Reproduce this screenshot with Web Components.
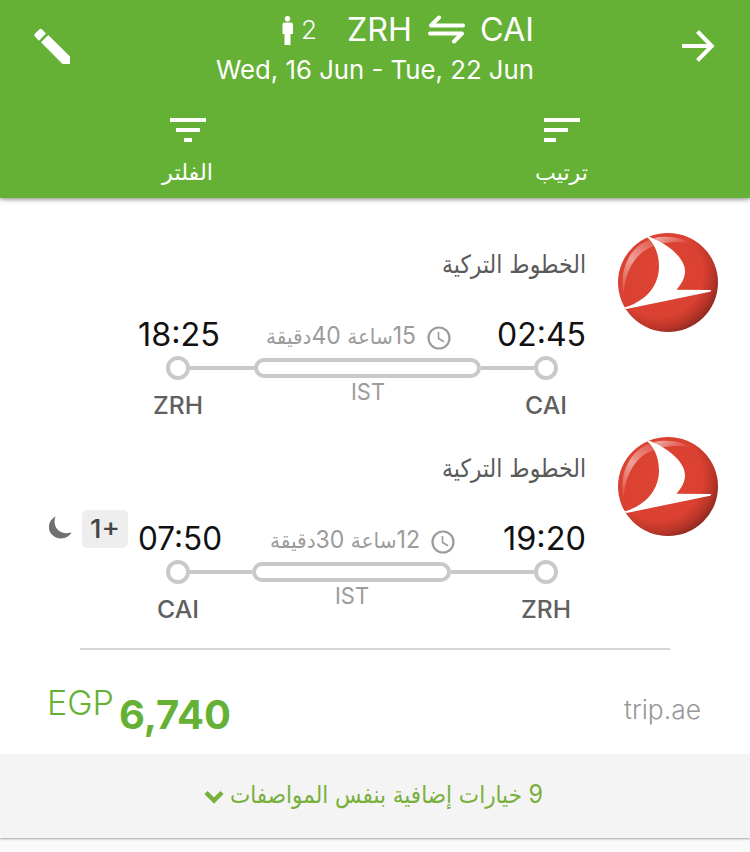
<!DOCTYPE html>
<html lang="ar">
<head>
<meta charset="utf-8">
<title>ZRH - CAI</title>
<style>
    body {
        margin: 0;
        background: #fafafa;
        font-family: Inter, "DejaVu Sans", sans-serif;
    }
</style>
</head>
<body>
<flight-app></flight-app>

<script>
// one line of text, squeezed or stretched to the given width
class FitText extends HTMLElement {
    constructor() {
        super();
        this.attachShadow({ mode: 'open' });
    }

    connectedCallback() {
        const width = this.getAttribute('width');
        this.shadowRoot.innerHTML = `<style>
            :host{
                display:block;
                flex:none;
                width:${width}px;
                white-space:nowrap;
                direction:ltr;
            }
            .inner{
                display:inline-block;
                transform-origin:0 50%;
            }
            ::slotted(.ar){
                font-family:"DejaVu Sans", sans-serif;
                line-height:0;
            }
            </style><span class="inner" dir="${this.getAttribute('dir') || 'ltr'}"><slot></slot></span>`;
        const inner = this.shadowRoot.querySelector('.inner');
        const natural = inner.getBoundingClientRect().width;
        if (natural) {
            inner.style.transform = `scaleX(${width / natural})`;
        }
    }
}

class SearchHeader extends HTMLElement {
    constructor() {
        super();
        this.attachShadow({ mode: 'open' });
    }

    connectedCallback() {
        this.shadowRoot.innerHTML = `<style>
            :host{
                display:block;
                box-sizing:border-box;
                height:198px;
                background:#65b135;
                color:white;
                box-shadow:0 1px 5px rgba(0,0,0,.5);
                position:relative;
            }
            svg{
                display:block;
                fill:white;
            }
            .top{
                display:flex;
                align-items:flex-start;
                justify-content:space-between;
                height:100px;
                padding:0 28px;
            }
            .edit{
                margin-top:22px;
            }
            .back{
                margin-top:22px;
            }
            .summary{
                display:flex;
                flex-direction:column;
                align-items:flex-end;
                padding-top:10px;
                width:318px;
            }
            .route{
                display:flex;
                align-items:center;
                height:40px;
                line-height:40px;
                font-size:32px;
            }
            .count{
                font-size:26px;
                font-weight:300;
                margin:0 30px 0 7px;
            }
            .swap{
                margin:0 15px 0 16px;
            }
            .dates{
                line-height:40px;
                font-size:26px;
            }
            .tabs{
                display:grid;
                grid-template-columns:1fr 1fr;
            }
            .tab{
                display:flex;
                flex-direction:column;
                align-items:center;
                padding-top:18px;
            }
            .tab fit-text{
                font-size:24px;
                line-height:40px;
                margin-top:10px;
            }
            </style>
            <div class="top">
                <svg class="edit" width="48" height="48" viewBox="0 0 48 48"><path d="M42 42h-7.500L13 20.200l7.200-7.300L42 34.500zM11 18.700L6.900 14.600a2 2 0 0 1 0-2.800l4.400-4.300a2 2 0 0 1 2.800 0L18 11.400z"/></svg>
                <div class="summary">
                    <div class="route">
                        <svg width="12" height="29" viewBox="0 0 12 29"><circle cx="5.500" cy="2.700" r="2.700"/><path d="M2 6.500h7a2 2 0 0 1 2 2V18H8.500v11h-6V18H.5V8.500a2 2 0 0 1 1.500-2z"/></svg>
                        <fit-text class="count" width="16">2</fit-text>
                        <fit-text width="65">ZRH</fit-text>
                        <svg class="swap" width="37" height="30" viewBox="0 0 37 30"><path d="M35 10.500H3L11 2.500M2 18.500h32l-8 8" fill="none" stroke="white" stroke-width="4" stroke-linecap="round" stroke-linejoin="round"/></svg>
                        <fit-text width="54">CAI</fit-text>
                    </div>
                    <fit-text class="dates" width="318">Wed, 16 Jun - Tue, 22 Jun</fit-text>
                </div>
                <svg class="back" width="48" height="48" viewBox="0 0 48 48"><path d="M8 24H36M23.500 9.500L37.800 24 23.500 38.500" fill="none" stroke="white" stroke-width="4"/></svg>
            </div>
            <div class="tabs">
                <div class="tab">
                    <svg width="36" height="24"><path d="M0 0h36v4H0zM6 10h24v4H6zM14 20h8v4h-8z"/></svg>
                    <fit-text dir="rtl" width="51"><span class="ar" style="font-size:22px">الفلتر</span></fit-text>
                </div>
                <div class="tab" style="padding-right:2px">
                    <svg width="36" height="24"><path d="M0 0h36v4H0zM0 10h24v4H0zM0 20h12v4H0z"/></svg>
                    <fit-text dir="rtl" width="53"><span class="ar" style="font-size:22px">ترتيب</span></fit-text>
                </div>
            </div>`;
    }
}

class AirlineLogo extends HTMLElement {
    constructor() {
        super();
        this.attachShadow({ mode: 'open' });
        this.shadowRoot.innerHTML = `<style>
            :host{
                display:block;
                width:100px;
                height:100px;
            }
            svg{
                display:block;
            }
            </style>
            <svg width="100" height="100" viewBox="0 0 100 100">
                <defs>
                    <radialGradient id="ball" cx=".4" cy=".4" r=".64">
                        <stop offset="0" stop-color="#de4433"/>
                        <stop offset=".7" stop-color="#db4132"/>
                        <stop offset=".88" stop-color="#b83528"/>
                        <stop offset="1" stop-color="#8c2a20"/>
                    </radialGradient>
                    <linearGradient id="shineLeft" x1=".7" y1="0" x2=".2" y2="1">
                        <stop offset="0" stop-color="#fff" stop-opacity=".2"/>
                        <stop offset=".45" stop-color="#fff" stop-opacity=".5"/>
                        <stop offset="1" stop-color="#fff" stop-opacity="0.15"/>
                    </linearGradient>
                    <linearGradient id="shineTop" x1="0" y1="0" x2="1" y2=".3">
                        <stop offset="0" stop-color="#fff" stop-opacity=".6"/>
                        <stop offset="1" stop-color="#fff" stop-opacity="0"/>
                    </linearGradient>
                </defs>
                <ellipse cx="50" cy="49.500" rx="50" ry="49.500" fill="url(#ball)"/>
                <path d="M5.500 60C1 36 12 14 31 7L36 13C22 17 8 32 5.500 60z" fill="url(#shineLeft)"/>
                <path d="M36 5C50 2 66 5 76 12C66 8.500 56 8 43 11z" fill="url(#shineTop)"/>
                <path d="M29 4C39 13 41 25 41 34C41 48 33 60 24 66C19 69.500 13 73 6.500 74.200L8.500 76L92 58.800Q94.500 57.500 92 57L58.500 56.700C64 50 67 45 67 38C67 26 52 12 32 4z" fill="#fff"/>
            </svg>`;
    }
}

class FlightLeg extends HTMLElement {
    constructor() {
        super();
        this.attachShadow({ mode: 'open' });
    }

    connectedCallback() {
        this.render();
    }

    render() {
        const d = this.dataset;
        this.shadowRoot.innerHTML = `<style>
            :host{
                display:flex;
                box-sizing:border-box;
                height:204px;
                padding-right:32px;
            }
            .aside{
                display:flex;
                align-items:flex-start;
                justify-content:flex-end;
                box-sizing:border-box;
                width:139px;
                padding:93px 11px 0 0;
            }
            .track{
                width:446px;
                padding-top:31px;
            }
            .airline{
                display:flex;
                justify-content:flex-end;
                margin-right:-1px;
                font-size:26px;
                line-height:40px;
                color:#5a5a5a;
            }
            .times{
                display:flex;
                justify-content:space-between;
                margin:33px -1px 0;
                line-height:36px;
                height:36px;
                font-size:32px;
                color:#111;
            }
            .duration{
                display:flex;
                align-items:center;
                font-size:24px;
                color:#9b9b9b;
            }
            .duration fit-text{
                margin-top:1px;
            }
            .duration svg{
                margin:6px 0 0 11px;
            }
            .rail{
                display:flex;
                height:24px;
                margin:3px 27px 0;
            }
            .dot{
                box-sizing:border-box;
                width:24px;
                height:24px;
                border:4px solid #c9c9c9;
                border-radius:50%;
            }
            .line{
                height:4px;
                margin-top:10px;
                background:#c9c9c9;
            }
            .line.out{
                flex:${d.before};
            }
            .line.in{
                flex:${d.after};
            }
            .stop{
                flex:${d.stop};
                display:flex;
                flex-direction:column;
                align-items:center;
                padding-top:2px;
            }
            .pill{
                box-sizing:border-box;
                width:100%;
                height:20px;
                flex:none;
                border:4px solid #c9c9c9;
                border-radius:10px;
            }
            .stop fit-text{
                font-size:23px;
                line-height:29px;
                color:#9b9b9b;
            }
            .codes{
                display:flex;
                justify-content:space-between;
                margin-top:10px;
                line-height:32px;
                font-size:24px;
                font-weight:450;
                color:#606060;
            }
            .code{
                display:flex;
                justify-content:center;
                width:78px;
            }
            airline-logo{
                margin:20px 0 0 33px;
            }
            </style>
            <div class="aside"><slot></slot></div>
            <div class="track">
                <div class="airline"><fit-text dir="rtl" width="144"><span class="ar" style="font-size:25px">الخطوط التركية</span></fit-text></div>
                <div class="times">
                    <fit-text width="${d.departWidth}">${d.depart}</fit-text>
                    <div class="duration">
                        <fit-text dir="rtl" width="150">${d.hours}<span class="ar" style="font-size:21px">ساعة</span> ${d.minutes}<span class="ar" style="font-size:21px">دقيقة</span></fit-text>
                        <svg width="24" height="24" viewBox="0 0 24 24" fill="none" stroke="#9b9b9b"><circle cx="12" cy="12" r="10.500" stroke-width="2.200"/><path d="M11.500 6v6.500l5.500 3.300" stroke-width="1.600"/></svg>
                    </div>
                    <fit-text width="${d.arriveWidth}">${d.arrive}</fit-text>
                </div>
                <div class="rail">
                    <span class="dot"></span>
                    <span class="line out"></span>
                    <div class="stop">
                        <span class="pill"></span>
                        <fit-text width="34">${d.via}</fit-text>
                    </div>
                    <span class="line in"></span>
                    <span class="dot"></span>
                </div>
                <div class="codes">
                    <span class="code"><fit-text width="${d.fromWidth}">${d.from}</fit-text></span>
                    <span class="code"><fit-text width="${d.toWidth}">${d.to}</fit-text></span>
                </div>
            </div>
            <airline-logo></airline-logo>`;
    }
}

class NextDay extends HTMLElement {
    constructor() {
        super();
        this.attachShadow({ mode: 'open' });
        this.shadowRoot.innerHTML = `<style>
            :host{
                display:flex;
                align-items:flex-start;
            }
            svg{
                display:block;
                margin:6px 10px 0 0;
            }
            .days{
                display:flex;
                justify-content:center;
                width:46px;
                height:38px;
                border-radius:5px;
                background:#eee;
                color:#444;
                font-size:26px;
                font-weight:450;
                line-height:38px;
            }
            </style>
            <svg width="23" height="23" viewBox="0 0 23 23"><path d="M6.500.2C-1.500 4.500-1.500 14 2.800 18.500C9.500 25.500 20 22 22.500 16.200C12 20 2.500 12 6.500.2z" fill="#707070"/></svg>
            <span class="days"><fit-text width="30"><slot></slot></fit-text></span>`;
    }
}

class FlightCard extends HTMLElement {
    constructor() {
        super();
        this.attachShadow({ mode: 'open' });
    }

    connectedCallback() {
        this.shadowRoot.innerHTML = `<style>
            :host{
                display:block;
                background:white;
                box-shadow:0 1px 2px rgba(0,0,0,.35);
            }
            .legs{
                padding-top:15px;
            }
            .divider{
                height:2px;
                margin:27px 80px 0;
                background:#d6d6d6;
            }
            .price{
                display:flex;
                justify-content:space-between;
                height:104px;
                padding:0 49px 0 47px;
                color:#65b135;
            }
            .amount{
                display:flex;
            }
            .currency{
                font-size:34px;
                font-weight:300;
                line-height:40px;
                margin:33px 5px 0 0;
            }
            .value{
                font-size:40px;
                font-weight:700;
                line-height:48px;
                margin-top:41px;
            }
            .seller{
                font-size:26px;
                font-weight:300;
                line-height:40px;
                margin-top:40px;
                color:#999;
            }
            .more{
                display:flex;
                align-items:center;
                justify-content:center;
                box-sizing:border-box;
                height:84px;
                padding:0 4px 4px 0;
                background:#f4f4f4;
                color:#78b03c;
                font-size:26px;
                line-height:40px;
            }
            .more svg{
                margin:5px 6px 0 0;
            }
            </style>
            <div class="legs"><slot></slot></div>
            <div class="divider"></div>
            <div class="price">
                <div class="amount">
                    <fit-text class="currency" width="67">EGP</fit-text>
                    <fit-text class="value" width="112">6,740</fit-text>
                </div>
                <fit-text class="seller" width="77">trip.ae</fit-text>
            </div>
            <div class="more">
                <svg width="20" height="14" viewBox="0 0 20 14"><path d="M2 2.500l8 8 8-8" fill="none" stroke="#78b03c" stroke-width="4.500"/></svg>
                <fit-text dir="rtl" width="313">9 <span class="ar" style="font-size:24px">خيارات إضافية بنفس المواصفات</span></fit-text>
            </div>`;
    }
}

class FlightApp extends HTMLElement {
    constructor() {
        super();
        this.attachShadow({ mode: 'open' });
    }

    connectedCallback() {
        this.shadowRoot.innerHTML = `<style>
            :host{
                display:block;
                height:852px;
                overflow:hidden;
            }
            </style>
            <search-header></search-header>
            <flight-card>
                <flight-leg data-depart="18:25" data-depart-width="82" data-arrive="02:45" data-arrive-width="89"
                    data-hours="15" data-minutes="40" data-via="IST"
                    data-before="64" data-stop="227" data-after="53"
                    data-from="ZRH" data-from-width="50" data-to="CAI" data-to-width="42"></flight-leg>
                <flight-leg data-depart="07:50" data-depart-width="84" data-arrive="19:20" data-arrive-width="83"
                    data-hours="12" data-minutes="30" data-via="IST"
                    data-before="62" data-stop="199" data-after="83"
                    data-from="CAI" data-from-width="42" data-to="ZRH" data-to-width="50"><next-day>1+</next-day></flight-leg>
            </flight-card>`;
    }
}

customElements.define('fit-text', FitText);
customElements.define('search-header', SearchHeader);
customElements.define('airline-logo', AirlineLogo);
customElements.define('next-day', NextDay);
customElements.define('flight-leg', FlightLeg);
customElements.define('flight-card', FlightCard);
customElements.define('flight-app', FlightApp);
</script>
</body>
</html>
